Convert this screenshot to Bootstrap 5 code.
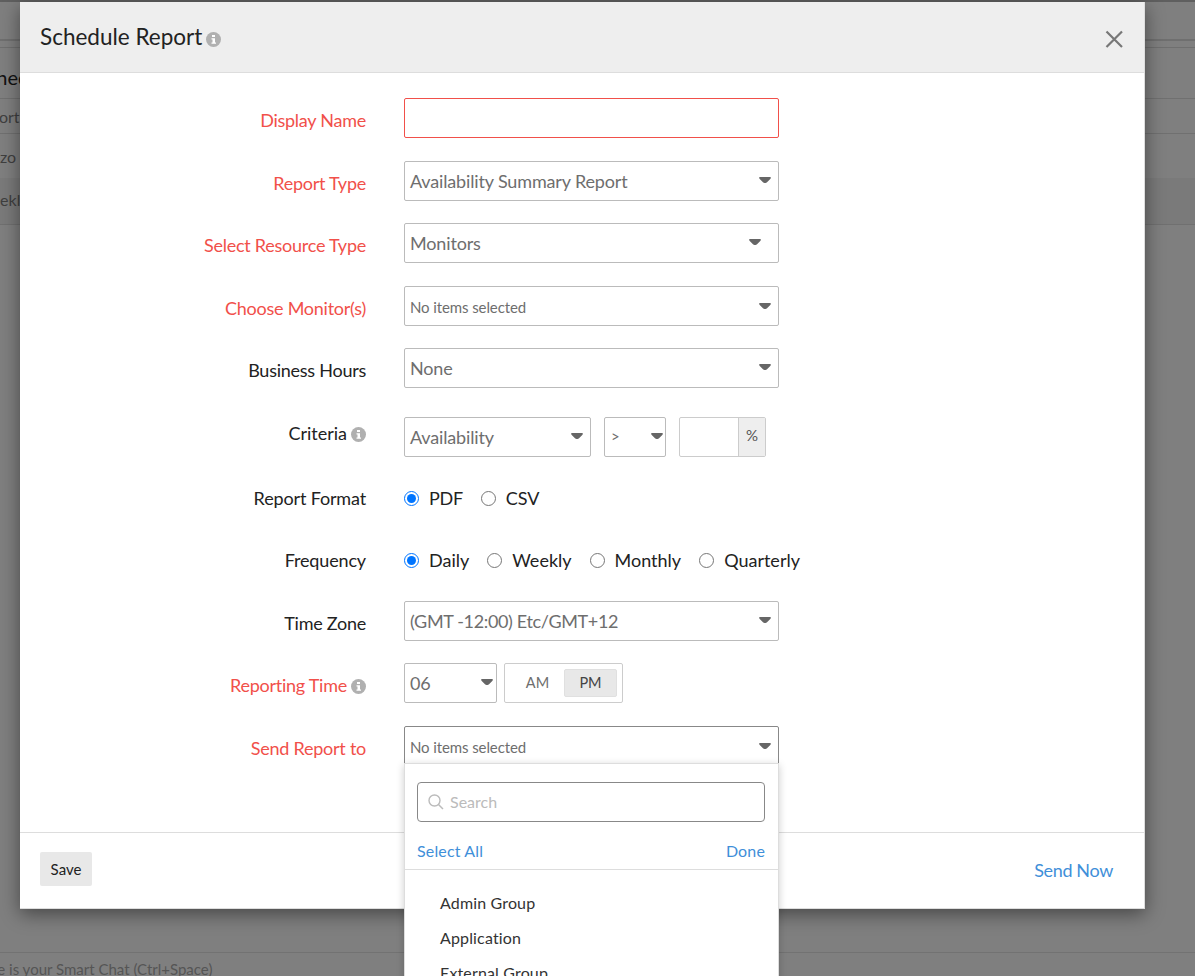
<!DOCTYPE html>
<html lang="en">
<head>
<meta charset="utf-8">
<title>Schedule Report</title>
<link rel="stylesheet" href="https://cdn.jsdelivr.net/npm/bootstrap@5.3.0/dist/css/bootstrap.min.css">
<style>
html,body{height:976px;overflow:hidden}
body{background:#7f7f7f;font-family:Lato,"Liberation Sans",sans-serif;color:#222;position:relative}
.back-strip{height:2px;background:#5f5f5f}
.back-head{height:38px;border-bottom:1px solid #6f6f6f}
.back-sub{height:7px}
.back-line{border-top:1px solid #6f6f6f}
.back-title{height:51px;font-size:20px;color:#111;line-height:58px;text-indent:-24px;white-space:nowrap}
.back-row{border-top:1px solid #707070;color:#3f3f3f;font-size:16px;white-space:nowrap;overflow:hidden}
.back-r1{height:35px;line-height:36px;text-indent:-28px}
.back-r2{height:45px;line-height:46px}
.back-r3{height:46px;line-height:44px;background:#7a7a7a;text-indent:-24px;border-top:0}
.back-chat{position:absolute;left:0;right:0;top:952px;height:24px;border-top:1px solid #727272;font-size:15px;color:#555;line-height:32px;text-indent:-27px;white-space:nowrap}
.sched-modal{position:absolute;left:20px;top:2px;width:1125px;height:907px;background:#fff;box-shadow:0 5px 18px rgba(0,0,0,.45);border-right:1px solid #ddd;border-bottom:1px solid #ddd}
.sched-head{height:71px;background:#eee;border-bottom:1px solid #ddd;padding:0 20px}
.sched-title{font-size:22.5px;line-height:1;color:#222}
.sched-close{width:24px;height:24px;margin:0 -2px 0 0;padding:0;border:0;background:none}
.sched-form{height:760px;padding-top:25px;border-bottom:1px solid #ddd}
.f-row{display:flex;align-items:flex-start}
.f-label{width:346px;text-align:right;font-size:18px;line-height:24px;padding-top:10px;flex:none;letter-spacing:-.25px}
.f-label.lab-crit{padding-top:4px;letter-spacing:0}
.f-label.lab-radio{padding-top:7px;letter-spacing:-.15px}
.f-req{color:#f1504a}
.f-ctl{margin-left:38px;display:flex;align-items:flex-start}
.h63{height:63px}.h62{height:62px}.h69{height:69px}.h60{height:60px}
.pick{width:375px;height:40px;border:1px solid #bbb;border-radius:2px;background:#fff;color:#6e6e6e;font-size:18px;letter-spacing:-.15px;padding:0 7px 1px 5px;display:flex;align-items:center;justify-content:space-between;line-height:1}
.pick.pick-sm{font-size:15px;padding-top:3px;letter-spacing:-.1px}
.pick.pick-res{padding-right:17px}
.pick.pick-tz{letter-spacing:-.35px}
.pick.pick-open{border-color:#888}
.pick.pick-err{border-color:#f1504a}
.pick svg{flex:none;margin-top:-2px}
.pick-crit{width:187px}
.pick-op{width:62px;margin-left:13px;font-size:15px;padding-left:6px;padding-right:2px}
.pick-hour{width:93px;margin-right:7px;padding-right:3px}
.pct{width:87px;height:40px;margin-left:13px;border:1px solid #ccc;border-radius:2px;display:flex}
.pct-box{flex:1}
.pct-unit{width:27px;background:#eee;border-left:1px solid #ccc;color:#555;font-size:15px;text-align:center;line-height:35px}
.radio-line{display:flex;align-items:center;font-size:18px;color:#222;height:24px;margin-top:7px}
.radio-line input{width:15px;height:15px;margin:0 10px 0 0;accent-color:#0075ff}
.radio-line label{margin-right:18px;display:flex;align-items:center}
.radio-line label.lab-tight{letter-spacing:-.3px}
.ampm{width:119px;height:40px;border:1px solid #ccc;border-radius:2px;padding:5px;display:flex;font-size:14.5px;color:#6e6e6e}
.ampm span{flex:1;display:flex;align-items:center;justify-content:center}
.ampm .am-opt{flex:0 0 54px;padding-left:1px}
.ampm .pm-on{background:#e8e8e8;border-radius:2px;color:#444;border:1px solid #e0e0e0}
.i-dot{margin-left:4px;vertical-align:-2px}
.sched-foot{padding:19px 20px 0;height:75px}
.btn-save{background:#e8e8e8;border:0;border-radius:2px;color:#222;font-size:15px;width:52px;height:34px;padding:0;line-height:32px}
.send-now{color:#3f8fd9;font-size:18px;letter-spacing:-.35px;text-decoration:none;margin:5px 11px 0 0}
.multi-drop{position:absolute;left:404px;top:763px;width:375px;height:240px;background:#fff;border:1px solid #ddd;box-shadow:0 2px 8px rgba(0,0,0,.2);z-index:5}
.drop-search{margin:18px 13px 0 12px;height:40px;border:1px solid #888;border-radius:4px;padding:0 10px;display:flex;align-items:center;color:#bbb;font-size:16px;gap:6px}
.drop-links{margin:0 13px 0 12px;height:47px;padding-top:19px;font-size:16px;line-height:20px;display:flex;justify-content:space-between;color:#3f8fd9;letter-spacing:.15px}
.drop-links a{color:inherit;text-decoration:none}
.drop-rule{border-top:1px solid #ddd}
.drop-list{list-style:none;margin:0;padding:15px 0 0 35px;font-size:16px;color:#333;letter-spacing:.15px}
.drop-list li{height:35px;line-height:35px}
</style>
</head>
<body>
<div class="back-strip"></div>
<div class="back-head"></div>
<div class="back-sub back-line"></div>
<div class="back-title back-line">Scheduled</div>
<div class="back-row back-r1">Report</div>
<div class="back-row back-r2">zo</div>
<div class="back-row back-r3">Weekly</div>
<div class="back-row"></div>
<div class="back-chat">Here is your Smart Chat (Ctrl+Space)</div>

<div class="sched-modal">
  <div class="sched-head d-flex align-items-center justify-content-between">
    <div class="sched-title">Schedule Report<svg class="i-dot" width="15" height="15" viewBox="0 0 15 15"><circle cx="7.5" cy="7.5" r="7.5" fill="#b0b0b0"/><rect x="6" y="3" width="3" height="2" fill="#fff"/><path d="M5.500 6.200h3.500v4.300h1v1.300h-4.500v-1.300h1v-3h-1z" fill="#fff"/></svg></div>
    <button class="sched-close" type="button" aria-label="Close"><svg width="24" height="24" viewBox="0 0 24 24"><path d="M4.500 4.500l15.500 15.500M20 4.500l-15.500 15.500" stroke="#777" stroke-width="2.200" fill="none"/></svg></button>
  </div>
  <div class="sched-form">
    <div class="f-row h63"><div class="f-label f-req">Display Name</div><div class="f-ctl"><div class="pick pick-err"></div></div></div>
    <div class="f-row h62"><div class="f-label f-req">Report Type</div><div class="f-ctl"><div class="pick">Availability Summary Report<svg width="12" height="6" viewBox="0 0 12 6"><path d="M.8 0h10.400q.8 0 .6 1l-.3.800-3.500 3.500q-.7.700-1.500.7h-1q-.8 0-1.500-.7l-3.500-3.500-.3-.8q-.2-1 .6-1z" fill="#666"/></svg></div></div></div>
    <div class="f-row h63"><div class="f-label f-req">Select Resource Type</div><div class="f-ctl"><div class="pick pick-res">Monitors<svg width="12" height="6" viewBox="0 0 12 6"><path d="M.8 0h10.400q.8 0 .6 1l-.3.800-3.500 3.500q-.7.700-1.500.7h-1q-.8 0-1.500-.7l-3.500-3.500-.3-.8q-.2-1 .6-1z" fill="#666"/></svg></div></div></div>
    <div class="f-row h62"><div class="f-label f-req">Choose Monitor(s)</div><div class="f-ctl"><div class="pick pick-sm">No items selected<svg width="12" height="6" viewBox="0 0 12 6"><path d="M.8 0h10.400q.8 0 .6 1l-.3.800-3.500 3.500q-.7.700-1.500.7h-1q-.8 0-1.500-.7l-3.500-3.500-.3-.8q-.2-1 .6-1z" fill="#666"/></svg></div></div></div>
    <div class="f-row h69"><div class="f-label">Business Hours</div><div class="f-ctl"><div class="pick">None<svg width="12" height="6" viewBox="0 0 12 6"><path d="M.8 0h10.400q.8 0 .6 1l-.3.800-3.500 3.500q-.7.700-1.500.7h-1q-.8 0-1.500-.7l-3.500-3.500-.3-.8q-.2-1 .6-1z" fill="#666"/></svg></div></div></div>
    <div class="f-row h62"><div class="f-label lab-crit">Criteria<svg class="i-dot" width="15" height="15" viewBox="0 0 15 15"><circle cx="7.500" cy="7.500" r="7.500" fill="#b0b0b0"/><rect x="6" y="3" width="3" height="2" fill="#fff"/><path d="M5.500 6.200h3.500v4.300h1v1.300h-4.500v-1.300h1v-3h-1z" fill="#fff"/></svg></div><div class="f-ctl"><div class="pick pick-crit">Availability<svg width="12" height="6" viewBox="0 0 12 6"><path d="M.8 0h10.400q.8 0 .6 1l-.3.800-3.500 3.500q-.7.700-1.500.7h-1q-.8 0-1.500-.7l-3.500-3.500-.3-.8q-.2-1 .6-1z" fill="#666"/></svg></div><div class="pick pick-op">&gt;<svg width="12" height="6" viewBox="0 0 12 6"><path d="M.8 0h10.400q.8 0 .6 1l-.3.800-3.500 3.500q-.7.700-1.500.7h-1q-.8 0-1.500-.7l-3.500-3.500-.3-.8q-.2-1 .6-1z" fill="#666"/></svg></div><div class="pct"><div class="pct-box"></div><div class="pct-unit">%</div></div></div></div>
    <div class="f-row h62"><div class="f-label lab-radio">Report Format</div><div class="f-ctl"><div class="radio-line"><label class="lab-tight"><input type="radio" name="fmt" checked>PDF</label><label><input type="radio" name="fmt">CSV</label></div></div></div>
    <div class="f-row h60"><div class="f-label lab-radio">Frequency</div><div class="f-ctl"><div class="radio-line"><label><input type="radio" name="frq" checked>Daily</label><label><input type="radio" name="frq">Weekly</label><label><input type="radio" name="frq">Monthly</label><label><input type="radio" name="frq">Quarterly</label></div></div></div>
    <div class="f-row h62"><div class="f-label">Time Zone</div><div class="f-ctl"><div class="pick pick-tz">(GMT -12:00) Etc/GMT+12<svg width="12" height="6" viewBox="0 0 12 6"><path d="M.8 0h10.400q.8 0 .6 1l-.3.800-3.500 3.500q-.7.700-1.500.7h-1q-.8 0-1.500-.7l-3.500-3.500-.3-.8q-.2-1 .6-1z" fill="#666"/></svg></div></div></div>
    <div class="f-row h63"><div class="f-label f-req">Reporting Time<svg class="i-dot" width="15" height="15" viewBox="0 0 15 15"><circle cx="7.500" cy="7.500" r="7.500" fill="#b0b0b0"/><rect x="6" y="3" width="3" height="2" fill="#fff"/><path d="M5.500 6.200h3.500v4.300h1v1.300h-4.500v-1.300h1v-3h-1z" fill="#fff"/></svg></div><div class="f-ctl"><div class="pick pick-hour">06<svg width="12" height="6" viewBox="0 0 12 6"><path d="M.8 0h10.400q.8 0 .6 1l-.3.800-3.500 3.500q-.7.700-1.500.7h-1q-.8 0-1.500-.7l-3.500-3.500-.3-.8q-.2-1 .6-1z" fill="#666"/></svg></div><div class="ampm"><span class="am-opt">AM</span><span class="pm-on">PM</span></div></div></div>
    <div class="f-row"><div class="f-label f-req">Send Report to</div><div class="f-ctl"><div class="pick pick-sm pick-open">No items selected<svg width="12" height="6" viewBox="0 0 12 6"><path d="M.8 0h10.400q.8 0 .6 1l-.3.800-3.500 3.500q-.7.700-1.500.7h-1q-.8 0-1.500-.7l-3.500-3.500-.3-.8q-.2-1 .6-1z" fill="#666"/></svg></div></div></div>
  </div>
  <div class="sched-foot d-flex justify-content-between align-items-start">
    <button class="btn btn-save" type="button">Save</button>
    <a class="send-now" href="#">Send Now</a>
  </div>
</div>

<div class="multi-drop">
  <div class="drop-search"><svg width="16" height="16" viewBox="0 0 16 16"><circle cx="6.500" cy="6.500" r="5.500" fill="none" stroke="#bbb" stroke-width="1.400"/><path d="M10.500 10.500l4.500 4.500" stroke="#bbb" stroke-width="1.500"/></svg><span>Search</span></div>
  <div class="drop-links"><a href="#">Select All</a><a href="#">Done</a></div>
  <div class="drop-rule"></div>
  <ul class="drop-list"><li>Admin Group</li><li>Application</li><li>External Group</li></ul>
</div>
<script src="https://cdn.jsdelivr.net/npm/bootstrap@5.3.0/dist/js/bootstrap.bundle.min.js"></script>
</body>
</html>
